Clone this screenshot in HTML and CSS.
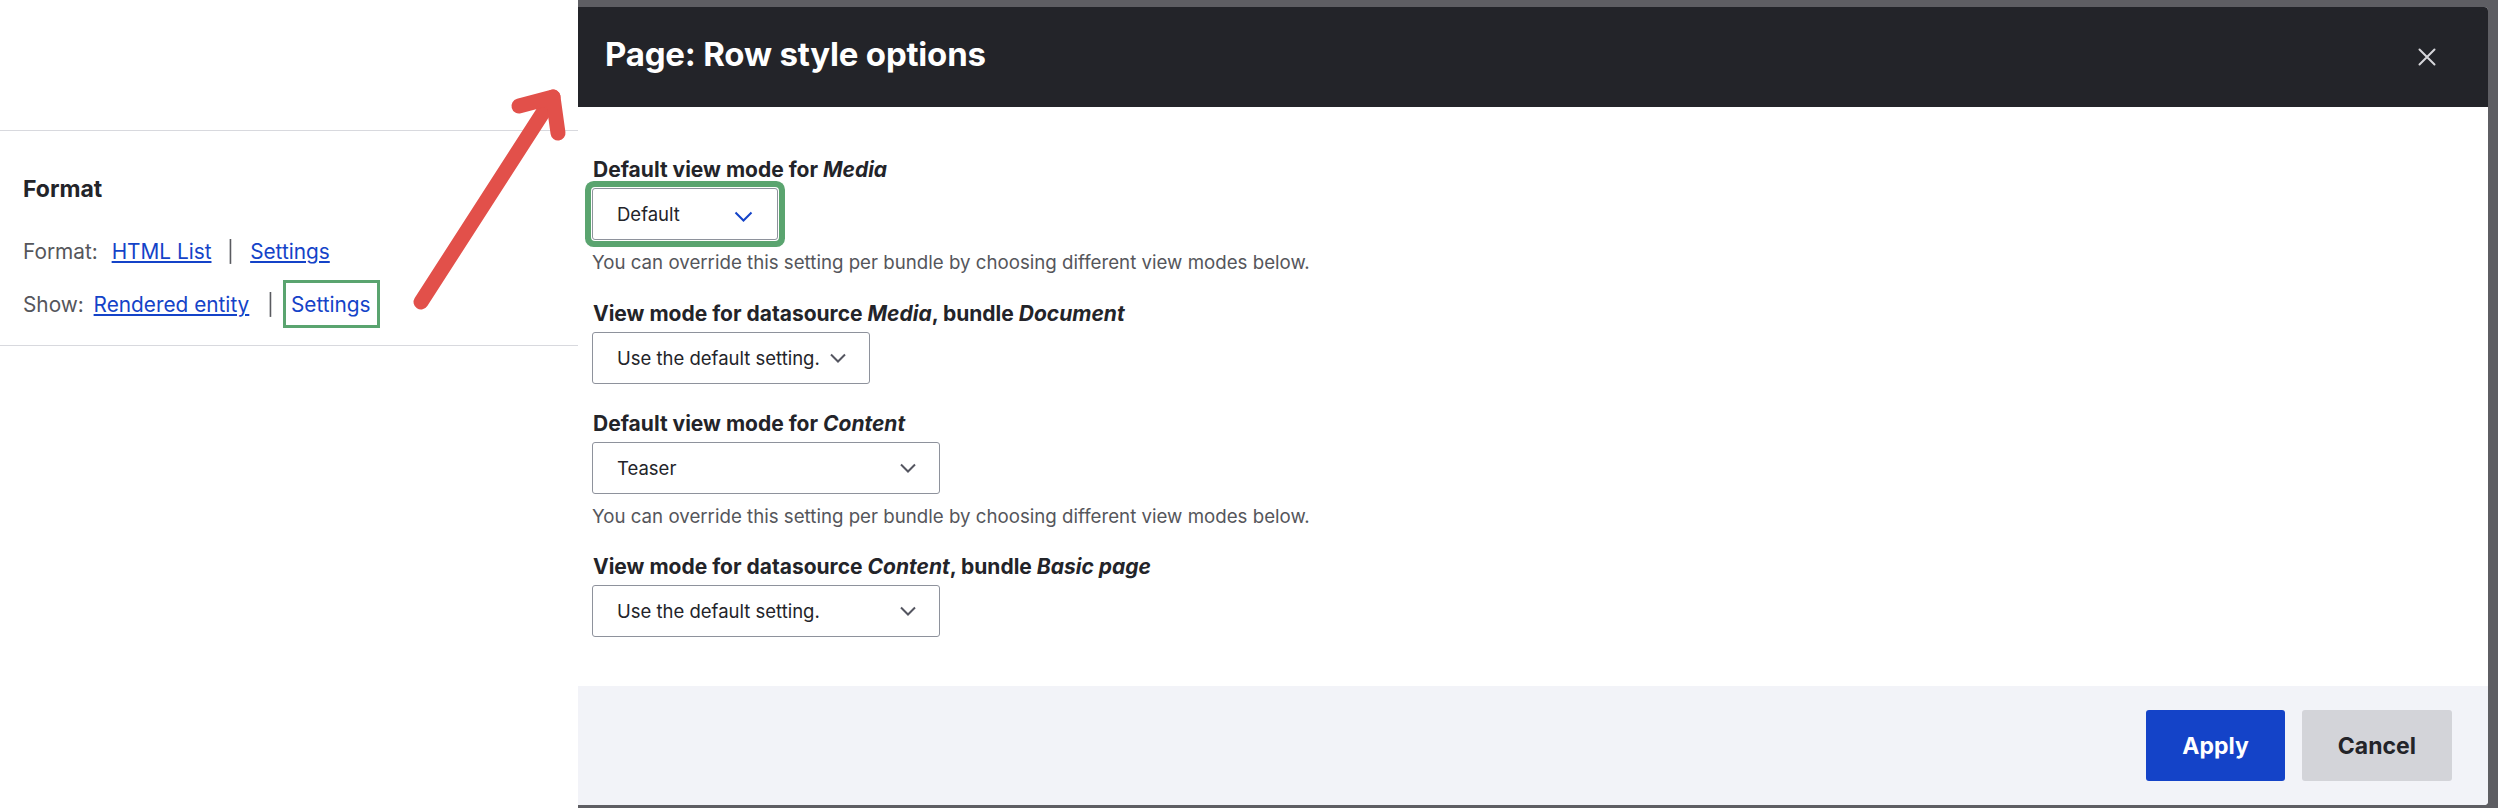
FILE: index.html
```html
<!DOCTYPE html>
<html lang="en">
<head>
<meta charset="utf-8">
<title>Page: Row style options</title>
<link rel="stylesheet" href="styles.css">
</head>
<body>
<div class="page">
  <aside class="views-panel">
    <div class="panel-top"></div>
    <section class="panel-section">
      <h3 class="panel-title">Format</h3>
      <div class="panel-row">
        <span class="row-label">Format:</span>
        <a href="#" class="row-link">HTML List</a>
        <span class="row-sep">|</span>
        <a href="#" class="row-link">Settings</a>
      </div>
      <div class="panel-row">
        <span class="row-label row-label--show">Show:</span>
        <a href="#" class="row-link">Rendered entity</a>
        <span class="row-sep row-sep--tight">|</span>
        <a href="#" class="row-link row-link--boxed">Settings</a>
      </div>
    </section>
  </aside>

  <div class="backdrop">
    <div class="dialog">
      <header class="dialog-header">
        <h2 class="dialog-title">Page: Row style options</h2>
        <button class="dialog-close" type="button" aria-label="Close">
          <svg width="18" height="18" viewBox="0 0 18 18"><path d="M1.5 1.5 L16.5 16.5 M16.5 1.5 L1.5 16.5" stroke="#d6d6da" stroke-width="2" fill="none" stroke-linecap="round"/></svg>
        </button>
      </header>

      <div class="dialog-body">
        <div class="form-item">
          <label class="form-label">Default view mode for <em>Media</em></label>
          <div class="select select--default select--focused">
            <span class="select-value">Default</span>
            <svg class="select-chevron select-chevron--focus" width="19" height="11" viewBox="0 0 19 11"><polyline points="1.5,1.5 9.5,9.5 17.5,1.5" fill="none" stroke="#1443c8" stroke-width="2"/></svg>
          </div>
          <div class="form-desc">You can override this setting per bundle by choosing different view modes below.</div>
        </div>

        <div class="form-item">
          <label class="form-label">View mode for datasource <em>Media</em>, bundle <em>Document</em></label>
          <div class="select select--narrow">
            <span class="select-value">Use the default setting.</span>
            <svg class="select-chevron" width="16" height="10" viewBox="0 0 16 10"><polyline points="1,1.5 8,8.5 15,1.5" fill="none" stroke="#545560" stroke-width="2"/></svg>
          </div>
        </div>

        <div class="form-item">
          <label class="form-label">Default view mode for <em>Content</em></label>
          <div class="select select--wide">
            <span class="select-value">Teaser</span>
            <svg class="select-chevron" width="16" height="10" viewBox="0 0 16 10"><polyline points="1,1.5 8,8.5 15,1.5" fill="none" stroke="#545560" stroke-width="2"/></svg>
          </div>
          <div class="form-desc">You can override this setting per bundle by choosing different view modes below.</div>
        </div>

        <div class="form-item form-item--last">
          <label class="form-label">View mode for datasource <em>Content</em>, bundle <em>Basic page</em></label>
          <div class="select select--wide">
            <span class="select-value">Use the default setting.</span>
            <svg class="select-chevron" width="16" height="10" viewBox="0 0 16 10"><polyline points="1,1.5 8,8.5 15,1.5" fill="none" stroke="#545560" stroke-width="2"/></svg>
          </div>
        </div>
      </div>

      <footer class="dialog-footer">
        <button class="btn btn--primary" type="button">Apply</button>
        <button class="btn btn--secondary" type="button">Cancel</button>
      </footer>
    </div>
  </div>

  <svg class="annotation-arrow" width="600" height="340" viewBox="0 0 600 340">
    <g fill="none" stroke="#e2504a" stroke-width="15" stroke-linecap="round" stroke-linejoin="round">
      <path d="M421 302 L553 97"/>
      <path d="M519 106 L553 97 L558 133"/>
    </g>
  </svg>
</div>
</body>
</html>
```

FILE: styles.css
```css
* { box-sizing: border-box; }

html, body {
  margin: 0;
  padding: 0;
  height: 100%;
}

body {
  font-family: Inter, "Noto Sans", "Liberation Sans", sans-serif;
  color: #232429;
  background: #ffffff;
  overflow: hidden;
}

.page {
  position: relative;
  display: flex;
  width: 2498px;
  height: 808px;
}

/* ---------- Left views panel ---------- */
.views-panel {
  width: 578px;
  flex: 0 0 578px;
  background: #ffffff;
}

.panel-top {
  height: 131px;
  border-bottom: 1px solid #d8d9de;
}

.panel-section {
  padding: 44px 0 28px 23px;
  border-bottom: 1px solid #d8d9de;
}

.panel-title {
  margin: 0;
  font-size: 23px;
  line-height: 28px;
  font-weight: 700;
  color: #232429;
}

.panel-row {
  font-size: 20.8px;
  line-height: 24px;
  color: #55565b;
  white-space: nowrap;
  margin-top: 29px;
}

.panel-title + .panel-row {
  margin-top: 37px;
}

.row-label {
  margin-right: 8px;
}

.row-label--show {
  margin-right: 4px;
}

.row-link {
  color: #1443c8;
  text-decoration: underline;
  text-underline-offset: 2px;
  text-decoration-thickness: 1.5px;
}

.row-sep {
  display: inline-block;
  margin: 0 10px 0 10px;
  color: #5a5b60;
  will-change: transform;
}

.row-sep--tight {
  margin: 0 3px 0 12px;
}

.row-link--boxed {
  text-decoration: none;
  padding: 9px 6px 8px 5px;
  border: 3px solid #5aa46f;
}

/* ---------- Backdrop + dialog ---------- */
.backdrop {
  flex: 1;
  background: #5e5e63;
  padding: 7px 10px 3px 0;
  display: flex;
}

.dialog {
  flex: 1;
  display: flex;
  flex-direction: column;
  background: #ffffff;
  border-radius: 0 4px 4px 0;
  overflow: hidden;
}

.dialog-header {
  height: 100px;
  flex: 0 0 100px;
  background: #232429;
  display: flex;
  align-items: center;
  justify-content: space-between;
  padding: 0 52px 6px 27px;
}

.dialog-title {
  margin: 0;
  font-size: 33px;
  line-height: 40px;
  font-weight: 700;
  color: #ffffff;
  letter-spacing: -0.2px;
}

.dialog-close {
  width: 18px;
  height: 18px;
  padding: 0;
  margin-top: 6px;
  border: 0;
  background: transparent;
  display: flex;
}

.dialog-body {
  flex: 1;
  padding: 51px 14px 0 14px;
}

.form-item + .form-item {
  margin-top: 28px;
}

.form-item--last {
  margin-top: 27px !important;
}

.form-label {
  display: block;
  font-size: 21px;
  line-height: 24px;
  font-weight: 700;
  color: #232429;
  margin-bottom: 6px;
  padding-left: 1px;
}

.form-label em {
  font-style: italic;
}

.select {
  display: flex;
  align-items: center;
  height: 52px;
  padding: 0 23px 0 24px;
  border: 1px solid #8e929c;
  border-radius: 3px;
  background: #ffffff;
  font-size: 18.5px;
  color: #232429;
  white-space: nowrap;
}

.select--default { width: 186px; }
.select--narrow { width: 278px; }
.select--wide { width: 348px; }

.select--focused {
  box-shadow: 0 0 0 1px #ffffff, 0 0 0 7px #5aa46f;
  border-radius: 3px;
}

.select-chevron {
  margin-left: auto;
  flex: 0 0 auto;
}

.select-chevron--focus {
  margin-top: 4px;
  margin-right: 1px;
}

.form-desc {
  margin-top: 12px;
  font-size: 18.7px;
  line-height: 22px;
  color: #55565b;
}

.dialog-footer {
  height: 119px;
  flex: 0 0 119px;
  background: #f2f3f8;
  display: flex;
  align-items: center;
  justify-content: flex-end;
  gap: 17px;
  padding: 0 36px 0 0;
}

.btn {
  height: 71px;
  padding: 0 36px;
  border: 0;
  border-radius: 3px;
  font-family: inherit;
  font-size: 23px;
  font-weight: 700;
  cursor: pointer;
}

.btn--primary {
  background: #1443c8;
  color: #ffffff;
}

.btn--secondary {
  background: #d3d4d9;
  color: #232429;
}

/* ---------- Annotation arrow (overlay) ---------- */
.annotation-arrow {
  position: absolute;
  left: 0;
  top: 0;
  pointer-events: none;
}
```
